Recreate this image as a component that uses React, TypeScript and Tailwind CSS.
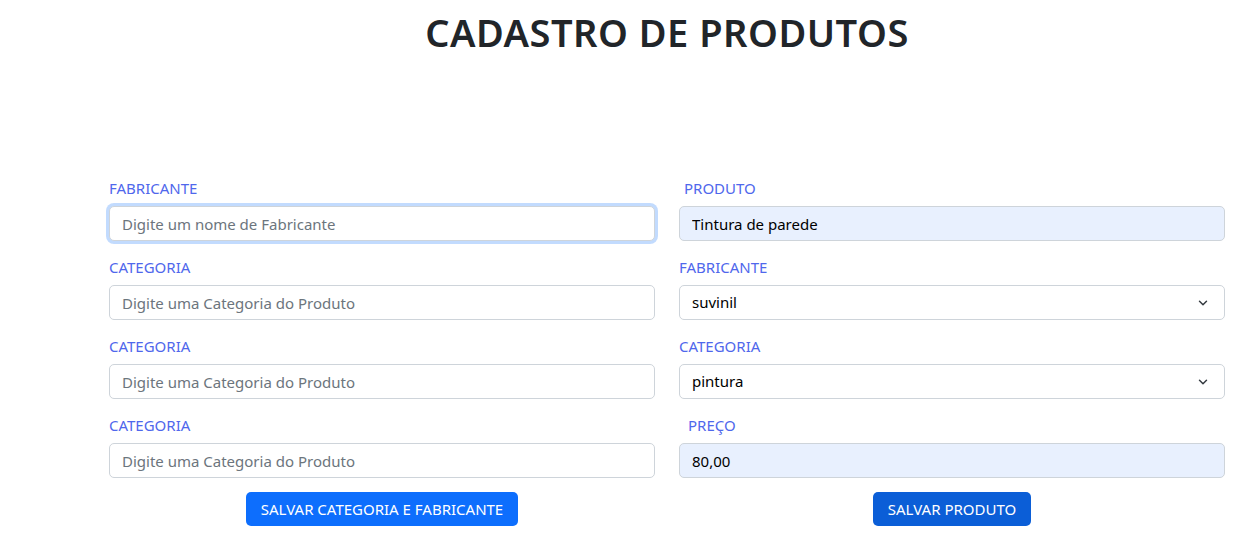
import { ChevronDown } from 'lucide-react'

const labelCls = 'block text-[15px] leading-6 mb-1.5 text-[#4f67ec] uppercase'
const inputCls =
  'w-full h-[35px] px-3 text-[15px] rounded-[5px] border border-[#ced4da] text-[#212529] placeholder:text-[#6c757d] outline-none'

function Field({ label, placeholder, indent = '' }: { label: string; placeholder: string; indent?: string }) {
  return (
    <div className="mb-[14px]">
      <label className={`${labelCls} ${indent}`}>{label}</label>
      <input className={`${inputCls} bg-white`} placeholder={placeholder} />
    </div>
  )
}

function Filled({ label, value, indent = '' }: { label: string; value: string; indent?: string }) {
  return (
    <div className="mb-[14px]">
      <label className={`${labelCls} ${indent}`}>{label}</label>
      <input className={`${inputCls} bg-[#e8f0fe] !text-black`} defaultValue={value} />
    </div>
  )
}

function Select({ label, value }: { label: string; value: string }) {
  return (
    <div className="mb-[14px]">
      <label className={labelCls}>{label}</label>
      <div className="relative">
        <select className={`${inputCls} bg-white appearance-none !text-black`} defaultValue={value}>
          <option value={value}>{value}</option>
        </select>
        <ChevronDown className="absolute right-[15px] top-[11px] w-[14px] h-[14px] text-[#343a40]" strokeWidth={2.5} />
      </div>
    </div>
  )
}

export default function App() {
  return (
    <div className="min-h-screen bg-white" style={{ fontFamily: '"Noto Sans", "Open Sans", sans-serif' }}>
      <div className="ml-[109px] w-[1116px]">
        <h1 className="text-center text-[38px] font-semibold leading-[44px] pt-[10px] text-[#212529] tracking-[0.5px]">
          CADASTRO DE PRODUTOS
        </h1>

        <div className="grid grid-cols-2 gap-x-6 mt-[122px]">
          <div>
            <div className="mb-[14px]">
              <label className={labelCls}>FABRICANTE</label>
              <input
                className={`${inputCls} bg-white border-[#86b7fe] shadow-[0_0_0_3px_rgba(13,110,253,0.25)]`}
                placeholder="Digite um nome de Fabricante"
              />
            </div>
            <Field label="CATEGORIA" placeholder="Digite uma Categoria do Produto" />
            <Field label="CATEGORIA" placeholder="Digite uma Categoria do Produto" />
            <Field label="CATEGORIA" placeholder="Digite uma Categoria do Produto" />
            <div className="flex justify-center mt-[3px]">
              <button className="h-[34px] px-[15px] rounded-[5px] bg-[#0d6efd] text-white text-[15px]">
                SALVAR CATEGORIA E FABRICANTE
              </button>
            </div>
          </div>

          <div>
            <Filled label="PRODUTO" value="Tintura de parede" indent="pl-[5px]" />
            <Select label="FABRICANTE" value="suvinil" />
            <Select label="CATEGORIA" value="pintura" />
            <Filled label="PREÇO" value="80,00" indent="pl-[9px]" />
            <div className="flex justify-center mt-[3px]">
              <button className="h-[34px] px-[15px] rounded-[5px] bg-[#0b5ed7] text-white text-[15px]">
                SALVAR PRODUTO
              </button>
            </div>
          </div>
        </div>
      </div>
    </div>
  )
}
